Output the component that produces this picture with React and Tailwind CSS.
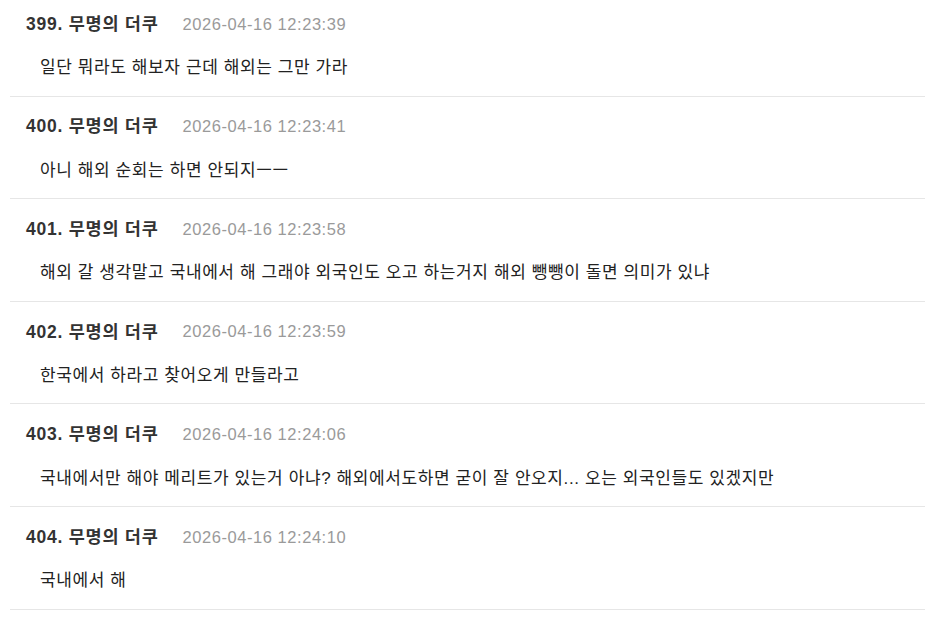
import React from "react";

const comments = [
  { no: 399, time: "2026-04-16 12:23:39", text: "일단 뭐라도 해보자 근데 해외는 그만 가라" },
  { no: 400, time: "2026-04-16 12:23:41", text: "아니 해외 순회는 하면 안되지ㅡㅡ" },
  { no: 401, time: "2026-04-16 12:23:58", text: "해외 갈 생각말고 국내에서 해 그래야 외국인도 오고 하는거지 해외 뺑뺑이 돌면 의미가 있냐" },
  { no: 402, time: "2026-04-16 12:23:59", text: "한국에서 하라고 찾어오게 만들라고" },
  { no: 403, time: "2026-04-16 12:24:06", text: "국내에서만 해야 메리트가 있는거 아냐? 해외에서도하면 굳이 잘 안오지... 오는 외국인들도 있겠지만" },
  { no: 404, time: "2026-04-16 12:24:10", text: "국내에서 해" },
];

export default function App() {
  return (
    <div
      className="w-[925px] h-[617px] overflow-hidden bg-white"
      style={{ fontFamily: '"Liberation Sans", "Noto Sans CJK KR", sans-serif' }}
    >
      <div className="-mt-[7px] pl-[10px]">
        {comments.map((c) => (
          <div key={c.no} className="border-t border-[#e6e6e6] pt-[15px] pb-[13.6px]">
            <div className="flex items-center h-[30px] pl-[16px]">
              <span className="text-[17.5px] font-bold text-[#333333] tracking-[0.75px] whitespace-nowrap">
                {c.no}. 무명의 더쿠
              </span>
              <span className="ml-[24px] text-[16.5px] text-[#9a9a9a] tracking-[0.55px] whitespace-nowrap">
                {c.time}
              </span>
            </div>
            <div className="mt-[15px] h-[28px] flex items-center pl-[30px] text-[17px] text-[#222222] tracking-[0.6px] whitespace-nowrap">
              {c.text}
            </div>
          </div>
        ))}
        <div className="border-t border-[#e6e6e6]" />
      </div>
    </div>
  );
}
